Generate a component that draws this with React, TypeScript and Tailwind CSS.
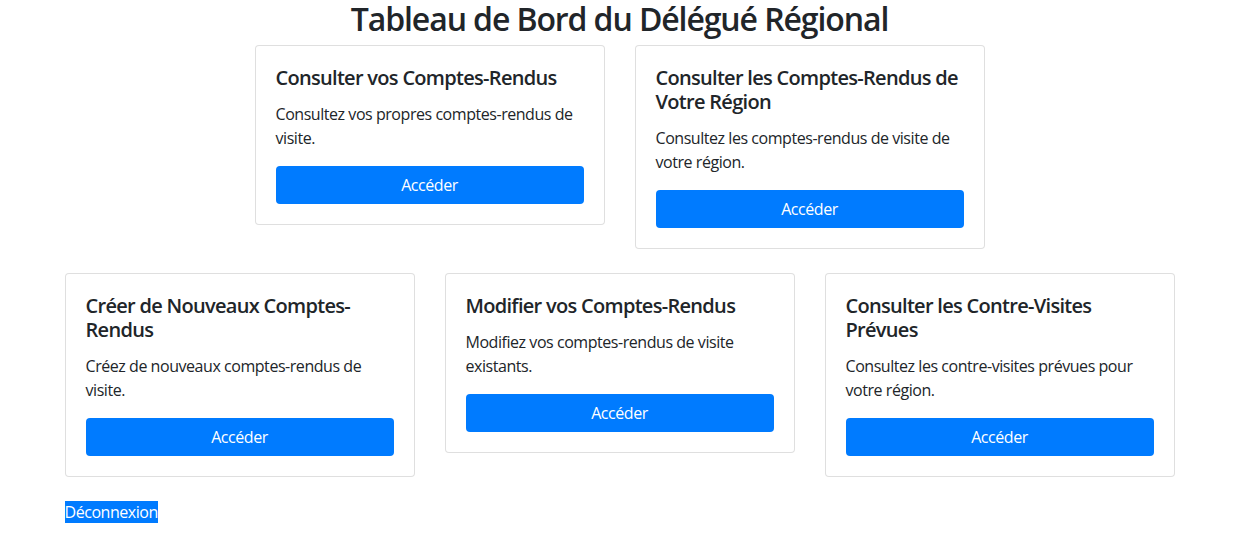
import React from "react";

const font = { fontFamily: '"Open Sans", "Noto Sans", sans-serif' };

function Card({ title, text }: { title: React.ReactNode; text: React.ReactNode }) {
  return (
    <div className="w-[380px] px-[15px]">
      <div className="mb-6 rounded border border-[rgba(0,0,0,0.125)] bg-white p-5">
        <h5 className="mb-3 text-[20px] font-semibold leading-6 tracking-[-0.7px] text-[#212529]">{title}</h5>
        <p className="mb-4 text-[16px] leading-6 tracking-[-0.45px] text-[#212529]">{text}</p>
        <button className="block h-[38px] w-full rounded bg-[#007bff] text-[16px] leading-6 tracking-[-0.45px] text-white">
          Accéder
        </button>
      </div>
    </div>
  );
}

export default function App() {
  return (
    <div className="min-h-[556px] bg-white text-[#212529]" style={font}>
      <div className="mx-auto w-[1140px] px-[15px]">
        <h1 className="mb-[7px] pt-0 text-center text-[32px] font-semibold leading-[38px] tracking-[-1.1px]">
          Tableau de Bord du Délégué Régional
        </h1>
        <div className="-mx-[15px] flex flex-wrap items-start justify-center">
          <Card title="Consulter vos Comptes-Rendus" text="Consultez vos propres comptes-rendus de visite." />
          <Card
            title={<>Consulter les Comptes-Rendus de<br />Votre Région</>}
            text={<>Consultez les comptes-rendus de visite de<br />votre région.</>}
          />
        </div>
        <div className="-mx-[15px] flex flex-wrap items-start justify-center">
          <Card title={<>Créer de Nouveaux Comptes-<br />Rendus</>} text="Créez de nouveaux comptes-rendus de visite." />
          <Card title="Modifier vos Comptes-Rendus" text="Modifiez vos comptes-rendus de visite existants." />
          <Card
            title="Consulter les Contre-Visites Prévues"
            text="Consultez les contre-visites prévues pour votre région."
          />
        </div>
        <div className="text-[16px] leading-[22px] tracking-[-0.45px]">
          <a href="#" className="bg-[#007bff] text-white">Déconnexion</a>
        </div>
      </div>
    </div>
  );
}
